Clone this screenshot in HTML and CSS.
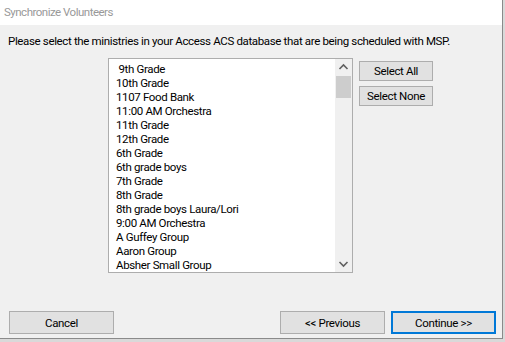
FILE: index.html
```html
<!doctype html>
<html lang="en">
    <head>
        <meta charset="UTF-8" />
        <title>Synchronize Volunteers</title>
        <link rel="stylesheet" href="styles.css">
    </head>
    <body>
        <div class="dialog">
            <div class="titleBar">Synchronize Volunteers</div>
            <div class="content">
                <p class="prompt">Please select the ministries in your Access ACS database that are being scheduled with MSP.</p>
                <div class="main">
                    <div class="listBox">
                        <ul class="items">
                            <li>&nbsp;9th Grade</li>
                            <li>10th Grade</li>
                            <li>1107 Food Bank</li>
                            <li>11:00 AM Orchestra</li>
                            <li>11th Grade</li>
                            <li>12th Grade</li>
                            <li>6th Grade</li>
                            <li>6th grade boys</li>
                            <li>7th Grade</li>
                            <li>8th Grade</li>
                            <li>8th grade boys Laura/Lori</li>
                            <li>9:00 AM Orchestra</li>
                            <li>A Guffey Group</li>
                            <li>Aaron Group</li>
                            <li>Absher Small Group</li>
                        </ul>
                        <div class="scrollBar">
                            <svg class="arrow" width="17" height="17" viewBox="0 0 17 17"><path d="M4.5 10 L8.5 6 L12.5 10" fill="none" stroke="#606060" stroke-width="1.6"/></svg>
                            <div class="track"><div class="thumb"></div></div>
                            <svg class="arrow" width="17" height="17" viewBox="0 0 17 17"><path d="M4.5 7 L8.5 11 L12.5 7" fill="none" stroke="#606060" stroke-width="1.6"/></svg>
                        </div>
                    </div>
                    <div class="sideButtons">
                        <button class="btn small">Select All</button>
                        <button class="btn small">Select None</button>
                    </div>
                </div>
                <div class="footer">
                    <button class="btn wide">Cancel</button>
                    <div class="navButtons">
                        <button class="btn wide">&lt;&lt; Previous</button>
                        <button class="btn wide default">Continue &gt;&gt;</button>
                    </div>
                </div>
            </div>
        </div>
    </body>
</html>
```

FILE: styles.css
```css
body {
    margin: 0;
    background-color: #d9d9d9;
    font-family: Roboto, "Liberation Sans", sans-serif;
    font-size: 11.5px;
    letter-spacing: -0.35px;
    color: #000;
}
.dialog {
    width: 502px;
    height: 338px;
    background-color: #f0f0f0;
    border-right: 1px solid #8a8a8a;
    border-bottom: 1px solid #8a8a8a;
    display: flex;
    flex-direction: column;
}
.titleBar {
    height: 25px;
    line-height: 24px;
    padding-left: 4px;
    background: #fff;
    color: #999;
    letter-spacing: -0.5px;
}
.content {
    flex: 1;
    display: flex;
    flex-direction: column;
}
.prompt {
    margin: 8px 0 0 8px;
    height: 17px;
    line-height: 17px;
    white-space: nowrap;
}
.main {
    display: flex;
    margin: 8px 0 0 108px;
}
.listBox {
    width: 243px;
    height: 213px;
    background: #fff;
    border: 1px solid #adadad;
    display: flex;
}
.items {
    flex: 1;
    list-style: none;
    margin: 0;
    padding: 3px 0 0 7px;
}
.items li {
    height: 14px;
    line-height: 14px;
    white-space: nowrap;
}
.scrollBar {
    width: 17px;
    background: #f0f0f0;
    display: flex;
    flex-direction: column;
}
.arrow {
    display: block;
}
.track {
    flex: 1;
}
.thumb {
    margin: 0 1px;
    height: 22px;
    background: #cdcdcd;
}
.sideButtons {
    display: flex;
    flex-direction: column;
    gap: 5px;
    margin: 3px 0 0 6px;
}
.btn {
    font-family: inherit;
    font-size: 11.5px;
    letter-spacing: -0.35px;
    color: #000;
    background: #e1e1e1;
    border: 1px solid #adadad;
    padding: 0;
    margin: 0;
}
.small {
    width: 74px;
    height: 20px;
}
.wide {
    width: 105px;
    height: 23px;
}
.default {
    border: 2px solid #0078d7;
}
.footer {
    margin-top: auto;
    display: flex;
    justify-content: space-between;
    padding: 0 6px 4px 9px;
}
.navButtons {
    display: flex;
    gap: 6px;
}
```
